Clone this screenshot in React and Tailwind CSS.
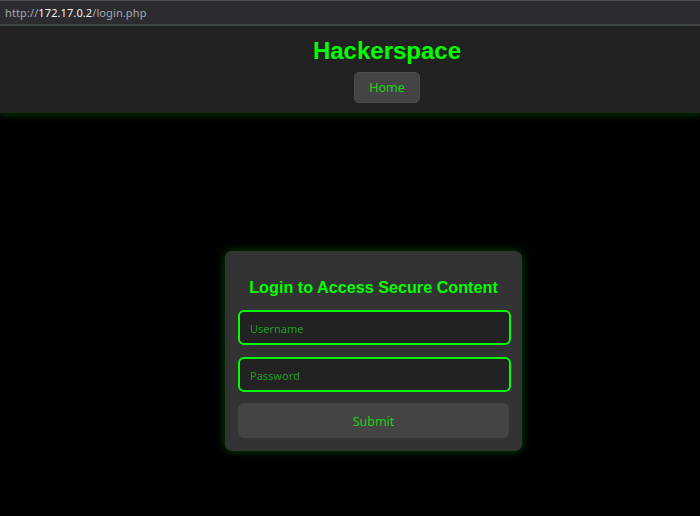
export default function App() {
  return (
    <div className="min-h-[516px] w-[700px] bg-black font-['Noto_Sans',sans-serif]">
      {/* address bar */}
      <div className="h-[26px] border-t border-[#4a4a50] bg-[#2b2b30] border-b-2 border-b-[#45454b] flex items-center pl-[5px]">
        <span className="text-[11px] leading-none text-[#a8a8ae] tracking-[0.1px]">
          http://<span className="text-[#f2f2f2]">172.17.0.2</span>/login.php
        </span>
      </div>

      <header className="relative z-10 h-[87px] bg-[#222] shadow-[0_3px_6px_rgba(0,255,0,0.18)]">
        <div className="flex flex-col items-center pl-[74px] pt-[10px]">
          <h1 className="font-['Liberation_Sans',Arial,sans-serif] text-[24px] font-bold leading-[30px] text-[#00ff00]">
            Hackerspace
          </h1>
          <button className="mt-[6px] h-[31px] w-[66px] rounded-[5px] border border-[#4c4c4c] bg-[#444] pt-[2px] text-[12.5px] text-[#19d419]">
            Home
          </button>
        </div>
      </header>

      <main className="flex justify-center pl-[47px] pt-[138px]">
        <div className="w-[297px] rounded-[7px] bg-[#333] px-[13px] pt-[26px] pb-[13px] shadow-[0_0_8px_rgba(0,255,0,0.3)]">
          <h2 className="text-center font-['Liberation_Sans',Arial,sans-serif] text-[16.2px] font-bold leading-[20px] text-[#00ff00]">
            Login to Access Secure Content
          </h2>
          <input
            type="text"
            placeholder="Username"
            className="mt-[13px] block h-[35px] w-[273px] rounded-[6px] border-2 border-[#00ff00] bg-[#222] px-[10px] pt-[1px] text-[11px] text-[#1f9c1f] placeholder:text-[#1f9c1f] outline-none"
          />
          <input
            type="password"
            placeholder="Password"
            className="mt-[12px] block h-[35px] w-[273px] rounded-[6px] border-2 border-[#00ff00] bg-[#222] px-[10px] pt-[1px] text-[11px] text-[#1f9c1f] placeholder:text-[#1f9c1f] outline-none"
          />
          <button className="mt-[11px] block h-[35px] w-[271px] rounded-[6px] bg-[#444] pt-[3px] text-[12.5px] text-[#1ccc1c]">
            Submit
          </button>
        </div>
      </main>
    </div>
  );
}
